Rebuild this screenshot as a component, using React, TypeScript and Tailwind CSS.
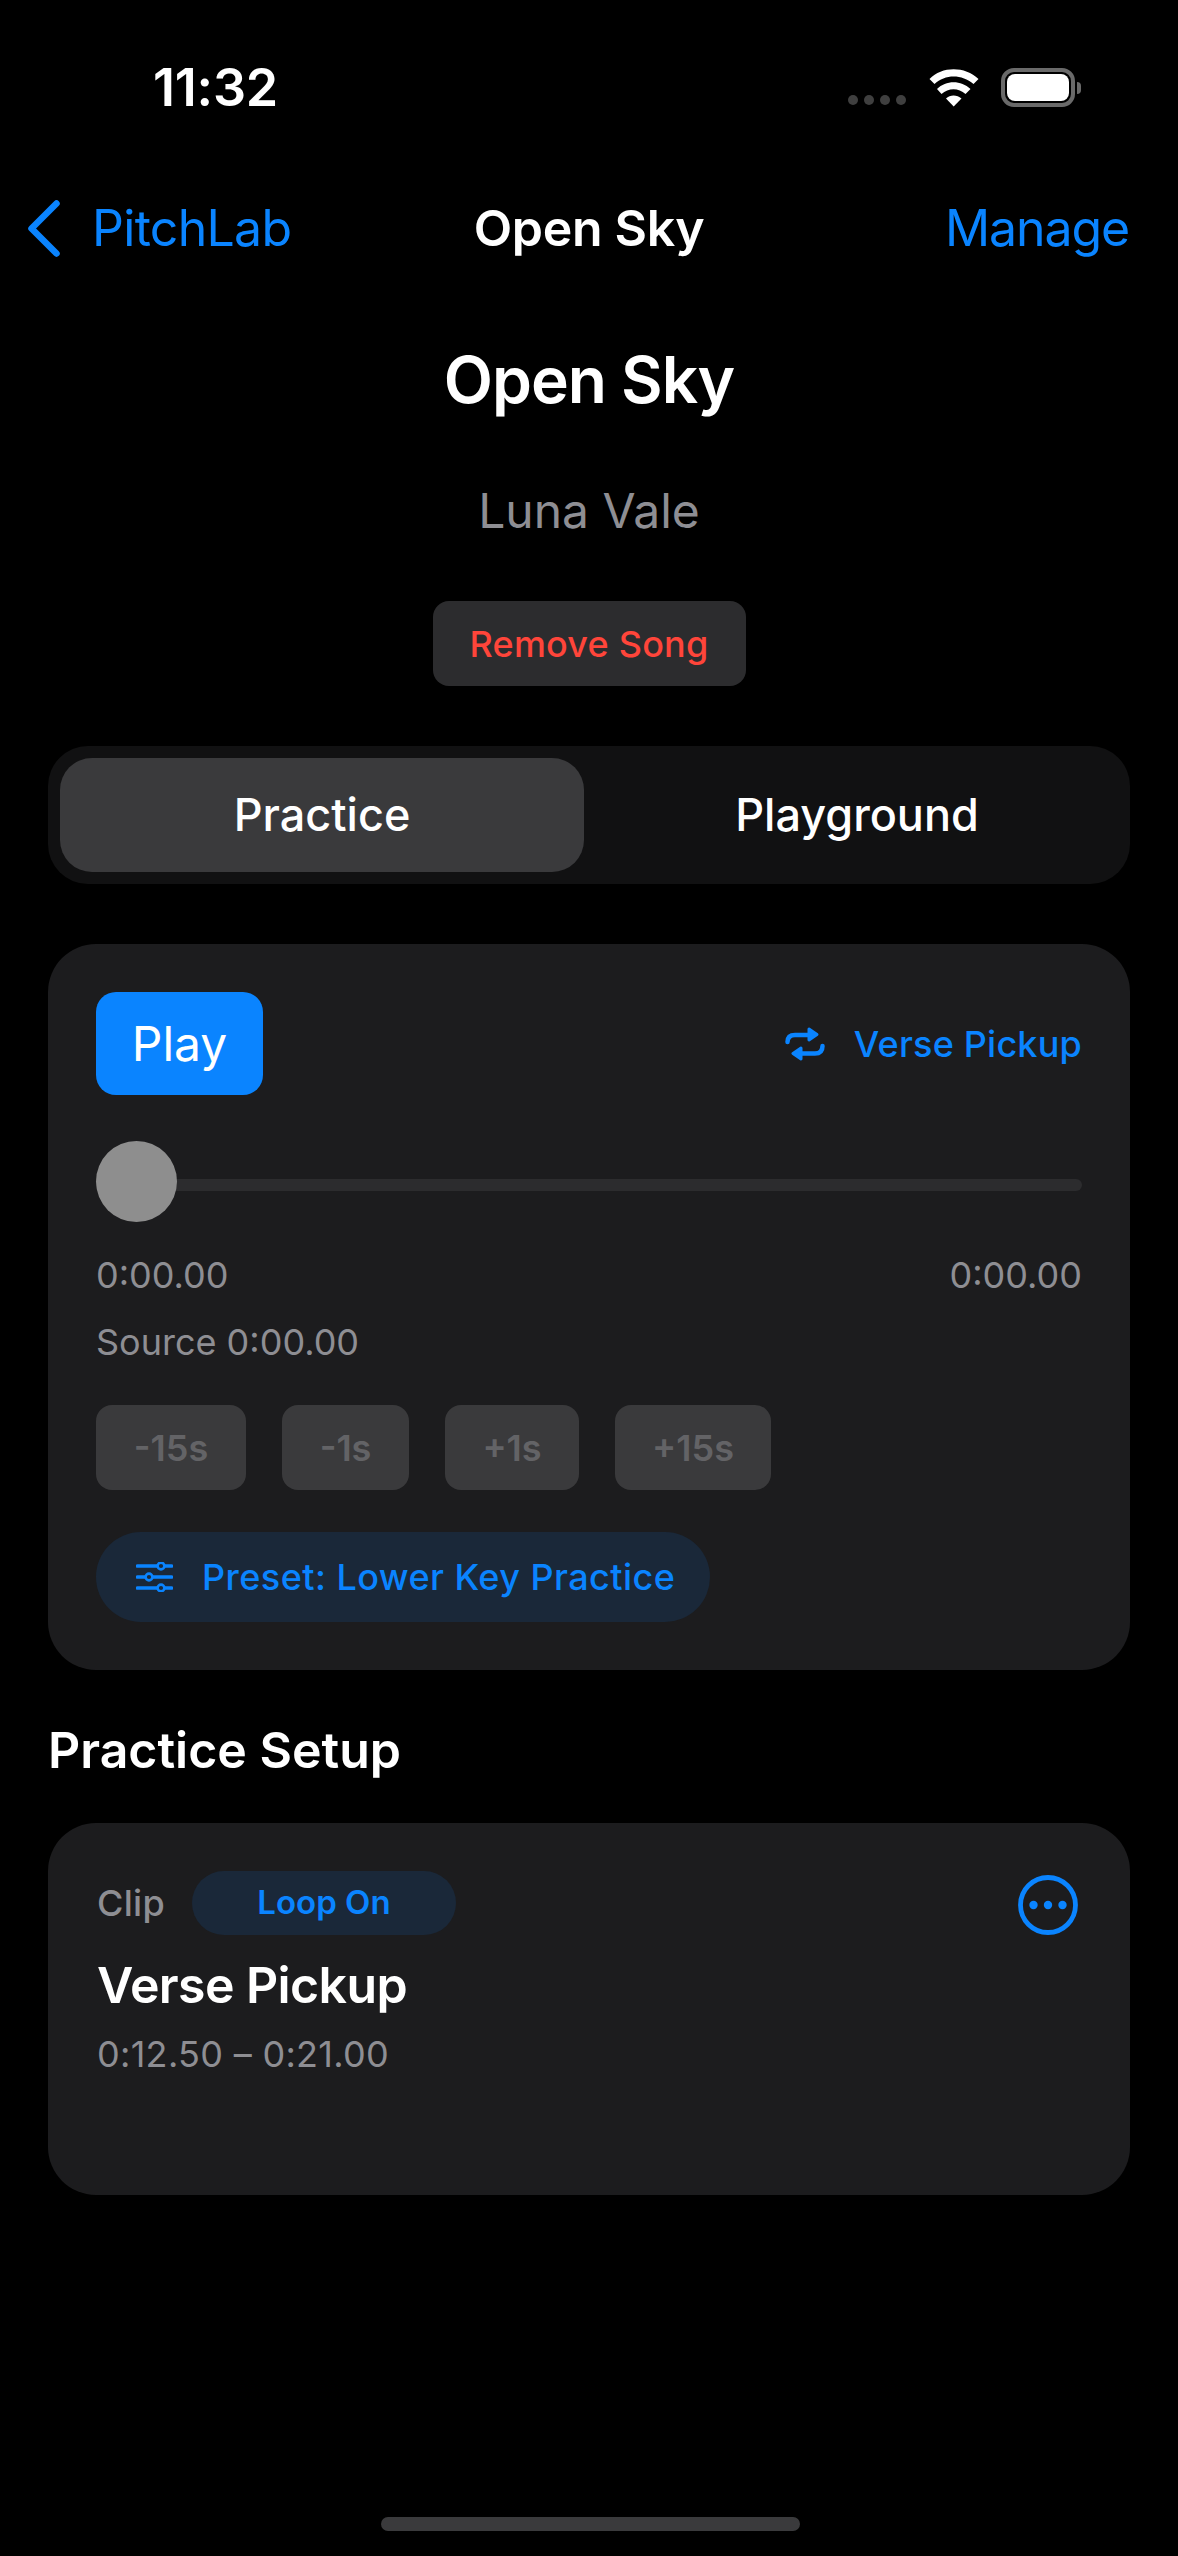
import React from 'react';

const Wifi = () => (
    <svg width="50" height="38" viewBox="0 0 50 38" fill="#fff">
        <path d="M0.5 10C13-3 36-3 49.5 10L44.5 15C33 5 16 5 5.5 15Z" />
        <path d="M8 20C17 11 32 11 41.5 20L36.5 25C29.5 18.5 19.5 18.5 12.5 25Z" />
        <path d="M17 29.5C21 25.5 28 25.5 32.5 29.5L24.7 37.5Z" />
    </svg>
);

const RepeatIcon = () => (
    <svg width="40" height="34" viewBox="0 0 40 34" fill="none" stroke="#0a84ff" strokeWidth="4.5" strokeLinecap="round" strokeLinejoin="round">
        <path d="M2.5 15Q2.5 8 10 8H24" />
        <path d="M24 2 32 7.5 24 13Z" fill="#0a84ff" strokeWidth="3" />
        <path d="M37.5 19Q37.5 26.5 30 26.5H16" />
        <path d="M16 21 8 26.5 16 32Z" fill="#0a84ff" strokeWidth="3" />
    </svg>
);

const SlidersIcon = () => (
    <svg width="37" height="30" viewBox="0 0 37 30" fill="none" stroke="#0a84ff" strokeLinecap="round">
        <path d="M1.5 4H35.5M1.5 15H35.5M1.5 26H35.5" strokeWidth="3.6" />
        <circle cx="25" cy="4" r="3.4" fill="#1a2839" strokeWidth="2.6" />
        <circle cx="13" cy="15" r="3.4" fill="#1a2839" strokeWidth="2.6" />
        <circle cx="25" cy="26" r="3.4" fill="#1a2839" strokeWidth="2.6" />
    </svg>
);

const MoreIcon = () => (
    <svg width="60" height="60" viewBox="0 0 60 60" fill="#0a84ff">
        <circle cx="30" cy="30" r="27.5" fill="none" stroke="#0a84ff" strokeWidth="4.8" />
        <circle cx="15.5" cy="30" r="4.2" />
        <circle cx="30" cy="30" r="4.2" />
        <circle cx="44.5" cy="30" r="4.2" />
    </svg>
);

const seekButtons = [
    { label: '-15s', width: 'w-[150px]' },
    { label: '-1s', width: 'w-[127px]' },
    { label: '+1s', width: 'w-[134px]' },
    { label: '+15s', width: 'w-[156px]' },
];

const App: React.FC = () => {
    return (
        <div className="relative w-[1178px] h-[2556px] bg-black text-white overflow-hidden font-['Inter',sans-serif]">
            {/* Status bar */}
            <div className="h-[176px] flex items-start justify-between pt-[62px] pl-[153px] pr-[97px]">
                <span className="text-[52px] leading-[52px] font-semibold tracking-[-0.2px]">11:32</span>
                <div className="flex items-end pt-[6px]">
                    <div className="flex gap-[6px] mb-[2px] mr-[23px]">
                        <span className="w-[10px] h-[10px] rounded-full bg-[#3f3f3f]" />
                        <span className="w-[10px] h-[10px] rounded-full bg-[#3f3f3f]" />
                        <span className="w-[10px] h-[10px] rounded-full bg-[#3f3f3f]" />
                        <span className="w-[10px] h-[10px] rounded-full bg-[#3f3f3f]" />
                    </div>
                    <Wifi />
                    <div className="flex items-center ml-[22px]">
                        <div className="w-[74px] h-[39px] rounded-[13px] border-[4px] border-[#6a6a6a] p-[2px]">
                            <div className="w-full h-full rounded-[8px] bg-white" />
                        </div>
                        <span className="w-[4px] h-[12px] ml-[2px] rounded-r-full bg-[#6a6a6a]" />
                    </div>
                </div>
            </div>

            {/* Nav bar */}
            <div className="h-[104px] grid grid-cols-[1fr_auto_1fr] items-center px-[28px]">
                <div className="flex items-center gap-[32px]">
                    <svg width="32" height="57" viewBox="0 0 32 57" fill="none" stroke="#0a84ff" strokeWidth="6.5" strokeLinecap="round" strokeLinejoin="round">
                        <path d="M28.5 3.5 3.5 28.5 28.5 53.5" />
                    </svg>
                    <span className="text-[50px] leading-[60px] text-[#0a84ff] tracking-[-0.7px]">PitchLab</span>
                </div>
                <div className="text-center text-[50px] leading-[60px] font-semibold tracking-[-0.3px]">Open Sky</div>
                <div className="pr-[21px] text-right text-[50px] leading-[60px] text-[#0a84ff] tracking-[-1.1px]">Manage</div>
            </div>

            {/* Song header */}
            <div className="flex flex-col items-center">
                <h1 className="mt-[61px] text-[64px] leading-[78px] font-semibold tracking-[-1px]">Open Sky</h1>
                <p className="mt-[62px] text-[48px] leading-[60px] text-[#8e8e93]">Luna Vale</p>
                <button className="mt-[60px] w-[313px] h-[85px] rounded-[16px] bg-[#2c2c2e] text-[36px] font-[550] tracking-[0.2px] text-[#ff453a]">
                    Remove Song
                </button>
            </div>

            <div className="px-[48px]">
                {/* Segmented control */}
                <div className="mt-[60px] h-[138px] rounded-[40px] bg-[#111112] p-[12px] flex">
                    <button className="w-[524px] rounded-[32px] bg-[#3a3a3c] text-[45px] font-medium">Practice</button>
                    <button className="flex-1 pl-[12px] text-[45px] font-medium">Playground</button>
                </div>

                {/* Player card */}
                <div className="mt-[60px] h-[726px] rounded-[48px] bg-[#1c1c1e] px-[48px] pt-[48px]">
                    <div className="flex items-center justify-between">
                        <button className="w-[167px] h-[103px] rounded-[20px] bg-[#0a84ff] text-[48px]">Play</button>
                        <div className="flex items-center gap-[29px] text-[36px] font-medium text-[#0a84ff] tracking-[0.2px]">
                            <RepeatIcon />
                            <span>Verse Pickup</span>
                        </div>
                    </div>

                    <div className="relative mt-[46px] h-[81px] flex items-center">
                        <div className="w-full h-[12px] mt-[7px] rounded-full bg-[#2c2c2e]" />
                        <div className="absolute left-0 top-0 w-[81px] h-[81px] rounded-full bg-[#8e8e8e]" />
                    </div>

                    <div className="mt-[31px] flex justify-between text-[36px] leading-[44px] text-[#8e8e93]">
                        <span>0:00.00</span>
                        <span>0:00.00</span>
                    </div>
                    <div className="mt-[23px] text-[36px] leading-[44px] text-[#8e8e93]">Source 0:00.00</div>

                    <div className="mt-[41px] flex gap-[36px]">
                        {seekButtons.map((b) => (
                            <button key={b.label} className={`${b.width} h-[85px] rounded-[16px] bg-[#3a3a3c] text-[36px] font-semibold text-[#636366]`}>
                                {b.label}
                            </button>
                        ))}
                    </div>

                    <div className="mt-[42px] w-[614px] h-[90px] rounded-full bg-[#1a2839] flex items-center pl-[40px] gap-[29px] text-[36px] font-medium text-[#0a84ff] tracking-[0.45px]">
                        <SlidersIcon />
                        <span>Preset: Lower Key Practice</span>
                    </div>
                </div>

                <h2 className="mt-[50px] text-[50px] leading-[60px] font-semibold">Practice Setup</h2>

                {/* Clip card */}
                <div className="mt-[43px] h-[372px] rounded-[48px] bg-[#1c1c1e] pl-[49px] pr-[52px] pt-[48px]">
                    <div className="flex items-start justify-between">
                        <div className="flex items-center gap-[27px]">
                            <span className="text-[36px] font-medium tracking-[0.3px] text-[#8e8e93]">Clip</span>
                            <span className="w-[264px] h-[64px] rounded-full bg-[#1a2839] flex items-center justify-center text-[33px] font-semibold text-[#0a84ff]">
                                Loop On
                            </span>
                        </div>
                        <div className="mt-[4px]">
                            <MoreIcon />
                        </div>
                    </div>
                    <div className="mt-[20px] text-[50px] leading-[60px] font-semibold tracking-[-0.6px]">Verse Pickup</div>
                    <div className="mt-[17px] text-[36px] leading-[44px] text-[#8e8e93] tracking-[0.3px]">0:12.50 – 0:21.00</div>
                </div>
            </div>

            {/* Home indicator */}
            <div className="absolute bottom-[25px] left-[381px] w-[419px] h-[14px] rounded-full bg-[#3a3a3c]" />
        </div>
    );
};

export default App;
